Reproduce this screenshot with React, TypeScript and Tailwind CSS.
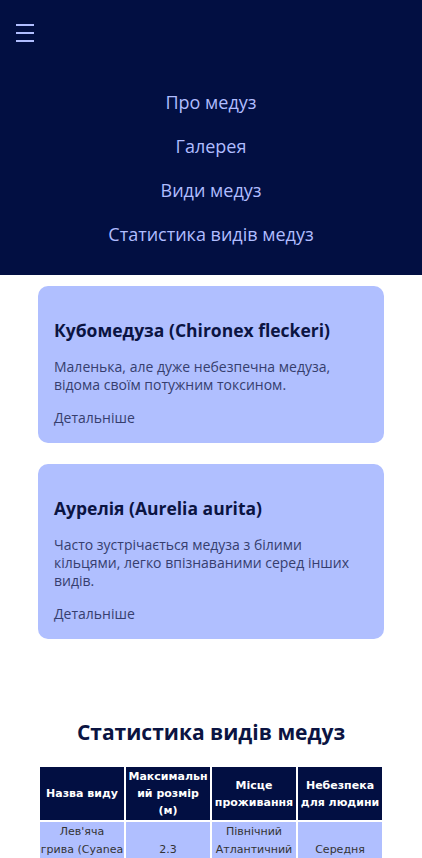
const NAV_LINKS = ["Про медуз", "Галерея", "Види медуз", "Статистика видів медуз"];

const CARDS = [
  {
    title: "Кубомедуза (Chironex fleckeri)",
    text: "Маленька, але дуже небезпечна медуза, відома своїм потужним токсином.",
  },
  {
    title: "Аурелія (Aurelia aurita)",
    text: "Часто зустрічається медуза з білими кільцями, легко впізнаваними серед інших видів.",
  },
];

const HEAD = ["Назва виду", "Максимальний розмір (м)", "Місце проживання", "Небезпека для людини"];

export default function App() {
  return (
    <div className="min-h-[858px] bg-white font-['Open_Sans',sans-serif]">
      {/* ── Header ─────────────────── */}
      <header className="h-[275px] bg-[#020f42] pt-[24px]">
        <button className="ml-[16px] flex w-[18px] flex-col gap-[6px]">
          <span className="h-[2px] w-[18px] bg-[#b0bdff]" />
          <span className="h-[2px] w-[18px] bg-[#b0bdff]" />
          <span className="h-[2px] w-[18px] bg-[#b0bdff]" />
        </button>
        <nav className="mt-[48px] flex flex-col items-center gap-[19px]">
          {NAV_LINKS.map((l) => (
            <a key={l} className="text-[18px] leading-[25px] text-[#b0bdff]">
              {l}
            </a>
          ))}
        </nav>
      </header>

      {/* ── Cards ─────────────────── */}
      <div className="mx-[38px] mt-[11px] flex flex-col gap-[21px]">
        {CARDS.map((c) => (
          <div key={c.title} className="rounded-[10px] bg-[#b0bfff] px-4 pt-[32px] pb-[16px]">
            <h3 className="text-[17.5px] font-bold leading-[24px] text-[#0b1442]">{c.title}</h3>
            <p className="mt-[16px] text-[14px] leading-[18px] text-[#363e6e]">{c.text}</p>
            <a className="mt-[15px] block text-[14px] leading-[18px] text-[#363e6e]">Детальніше</a>
          </div>
        ))}
      </div>

      {/* ── Stats ─────────────────── */}
      <section className="mt-[78px] px-[38px]">
        <h2 className="text-center text-[21px] font-bold leading-[30px] text-[#0b1442]">
          Статистика видів медуз
        </h2>
        <table className="mt-[18px] w-full table-fixed border-separate border-spacing-[2px] font-['DejaVu_Sans',sans-serif] leading-[17px]">
          <thead>
            <tr>
              {HEAD.map((h) => (
                <th key={h} className="break-words bg-[#020f42] px-0 py-[1px] text-center text-[11px] font-bold text-white">
                  {h}
                </th>
              ))}
            </tr>
          </thead>
          <tbody className="text-[11px] leading-[18px] text-[#333]">
            <tr>
              <td className="break-words bg-[#b0bfff] px-0 py-[1px] text-center">
                Лев'яча
                <br />
                грива (Cyanea capillata)
              </td>
              <td className="bg-[#b0bfff] px-0 py-[1px] text-center">2.3</td>
              <td className="break-words bg-[#b0bfff] px-0 py-[1px] text-center">Північний Атлантичний океан</td>
              <td className="bg-[#b0bfff] px-0 py-[1px] text-center">Середня</td>
            </tr>
          </tbody>
        </table>
      </section>
    </div>
  );
}
